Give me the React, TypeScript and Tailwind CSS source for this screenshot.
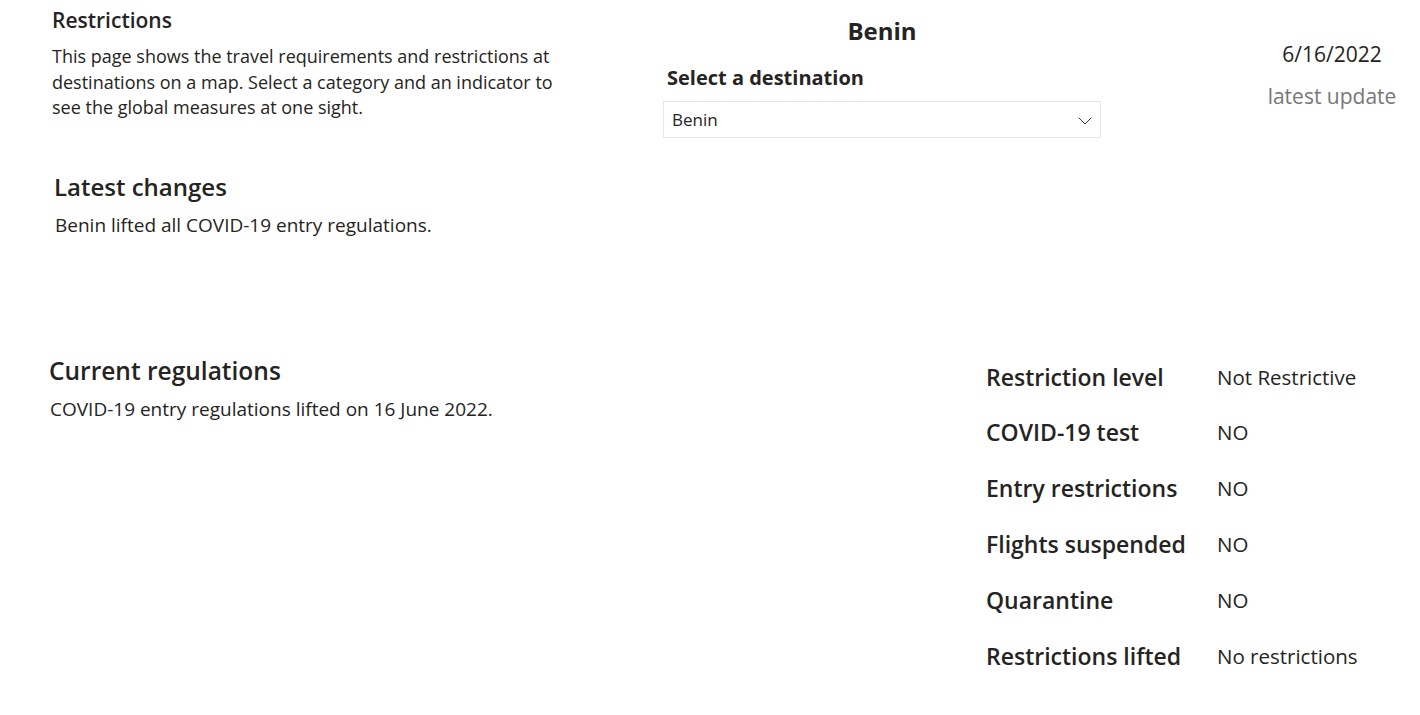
import { ChevronDown } from 'lucide-react'

const measures = [
  { label: 'Restriction level', value: 'Not Restrictive' },
  { label: 'COVID-19 test', value: 'NO' },
  { label: 'Entry restrictions', value: 'NO' },
  { label: 'Flights suspended', value: 'NO' },
  { label: 'Quarantine', value: 'NO' },
  { label: 'Restrictions lifted', value: 'No restrictions' },
]

export default function App() {
  return (
    <div className="w-[1420px] h-[715px] bg-white text-[#252423] font-['Open_Sans',sans-serif] overflow-hidden">
      {/* top row */}
      <div className="flex">
        <div className="ml-[52px] w-[611px] pt-[6px]">
          <h2 className="text-[21px] leading-[28px] font-semibold">Restrictions</h2>
          <p className="mt-[10px] w-[520px] text-[18px] leading-[25.5px]">
            This page shows the travel requirements and restrictions at destinations on a map. Select a category and an
            indicator to see the global measures at one sight.
          </p>
        </div>

        <div className="w-[438px] pt-[15px]">
          <h1 className="text-center text-[24px] leading-[32px] font-bold">Benin</h1>
          <div className="mt-[17px] pl-[4px] text-[20px] leading-[28px] font-bold">Select a destination</div>
          <div className="mt-[9px] h-[37px] border border-[#e6e6e6] flex items-center justify-between pl-[8px] pr-[3px]">
            <span className="text-[17px]">Benin</span>
            <ChevronDown className="h-6 w-6 mt-[3px] text-[#3b3a39]" strokeWidth={1} />
          </div>
        </div>

        <div className="ml-[161px] w-[140px] pt-[39px] text-center">
          <div className="text-[21px] leading-[30px]">6/16/2022</div>
          <div className="mt-[12px] text-[21px] leading-[30px] text-[#777777]">latest update</div>
        </div>
      </div>

      {/* latest changes */}
      <div className="ml-[54px] mt-[33px]">
        <h2 className="text-[24px] leading-[32px] font-semibold">Latest changes</h2>
        <p className="mt-[9px] ml-[1px] text-[19px] leading-[26px]">Benin lifted all COVID-19 entry regulations.</p>
      </div>

      {/* current regulations + measures */}
      <div className="flex mt-[117px]">
        <div className="ml-[49px] w-[937px]">
          <h2 className="text-[24.5px] leading-[32px] font-semibold">Current regulations</h2>
          <p className="mt-[9px] ml-[1px] text-[19px] leading-[26px]">COVID-19 entry regulations lifted on 16 June 2022.</p>
        </div>

        <div className="flex flex-col -mt-[6px]">
          {measures.map((m) => (
            <div key={m.label} className="flex items-center h-[55.8px]">
              <div className="w-[231px] text-[23px] font-semibold">{m.label}</div>
              <div className="text-[20.5px]">{m.value}</div>
            </div>
          ))}
        </div>
      </div>
    </div>
  )
}
